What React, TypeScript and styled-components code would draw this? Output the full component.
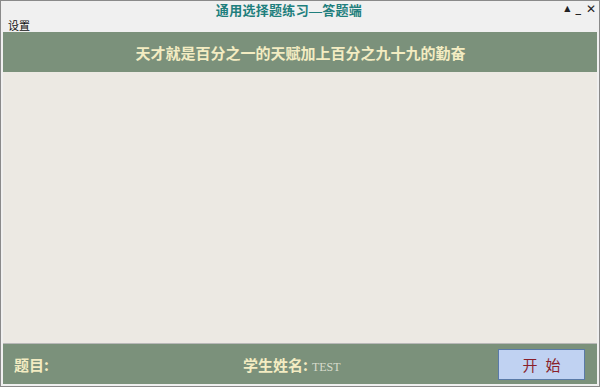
import React from "react";
import styled, { createGlobalStyle } from "styled-components";

const Global = createGlobalStyle`
  html, body { margin: 0; padding: 0; background: #f0f0f0; }
  #root { width: 600px; height: 387px; }
`;

const Window = styled.div`
  width: 600px;
  height: 387px;
  box-sizing: border-box;
  border: 1px solid #8a8a8a;
  background: #f0f0f0;
  display: flex;
  flex-direction: column;
  font-family: "Noto Sans CJK SC", "Liberation Sans", sans-serif;
`;

const TitleBar = styled.div`
  height: 16px;
  position: relative;
  display: flex;
  align-items: center;
  justify-content: center;
`;

const Title = styled.div`
  font-family: "Liberation Serif", "Noto Sans CJK SC", serif;
  font-weight: bold;
  font-size: 13px;
  color: #1f7f7d;
  margin-left: -22px;
  letter-spacing: 0.3px;
`;

const Controls = styled.div`
  position: absolute;
  right: 3px;
  top: 2px;
  display: flex;
  align-items: center;
  gap: 5px;
  color: #222;
`;

const Ctrl = styled.span<{ $size: number }>`
  font-family: "DejaVu Sans", sans-serif;
  font-size: ${(p) => p.$size}px;
  line-height: 12px;
  font-weight: bold;
`;

const MenuBar = styled.div`
  height: 15px;
  display: flex;
  align-items: center;
  padding-left: 7px;
  font-size: 11px;
  color: #111;
`;

const Panel = styled.div`
  margin: 0 2px;
  display: flex;
  flex-direction: column;
  flex: 1;
`;

const Banner = styled.div`
  height: 40px;
  background: #7b917b;
  display: flex;
  align-items: center;
  justify-content: center;
  color: #f3ecc2;
  font-weight: bold;
  font-size: 15px;
  padding-left: 1px;
`;

const Body = styled.div`
  flex: 1;
  background: #ece9e3;
`;

const Footer = styled.div`
  height: 40px;
  border-top: 1px solid #b8b8b8;
  background: #7b917b;
  display: flex;
  align-items: center;
  padding: 0 12px 0 11px;
  margin-bottom: 2px;
`;

const Label = styled.span`
  color: #f3ecc2;
  font-weight: bold;
  font-size: 15px;
`;

const Question = styled.div`
  width: 229px;
`;

const Student = styled.div`
  flex: 1;
  display: flex;
  align-items: baseline;
  gap: 4px;
`;

const Name = styled.span`
  font-family: "Liberation Serif", serif;
  font-size: 12px;
  color: #d8dccc;
`;

const StartButton = styled.button`
  width: 87px;
  height: 31px;
  background: #c0d2f2;
  border: 1px solid #5a7aa8;
  color: #8a1f2a;
  font-family: "Noto Sans CJK SC", sans-serif;
  font-size: 15px;
  letter-spacing: 8px;
  padding: 0 0 0 8px;
  margin-top: 1px;
`;

export default function App() {
  return (
    <>
      <Global />
      <Window>
        <TitleBar>
          <Title>通用选择题练习—答题端</Title>
          <Controls>
            <Ctrl $size={8}>▲</Ctrl>
            <Ctrl $size={11}>_</Ctrl>
            <Ctrl $size={12}>✕</Ctrl>
          </Controls>
        </TitleBar>
        <MenuBar>设置</MenuBar>
        <Panel>
          <Banner>天才就是百分之一的天赋加上百分之九十九的勤奋</Banner>
          <Body />
          <Footer>
            <Question>
              <Label>题目:</Label>
            </Question>
            <Student>
              <Label>学生姓名:</Label>
              <Name>TEST</Name>
            </Student>
            <StartButton>开始</StartButton>
          </Footer>
        </Panel>
      </Window>
    </>
  );
}
